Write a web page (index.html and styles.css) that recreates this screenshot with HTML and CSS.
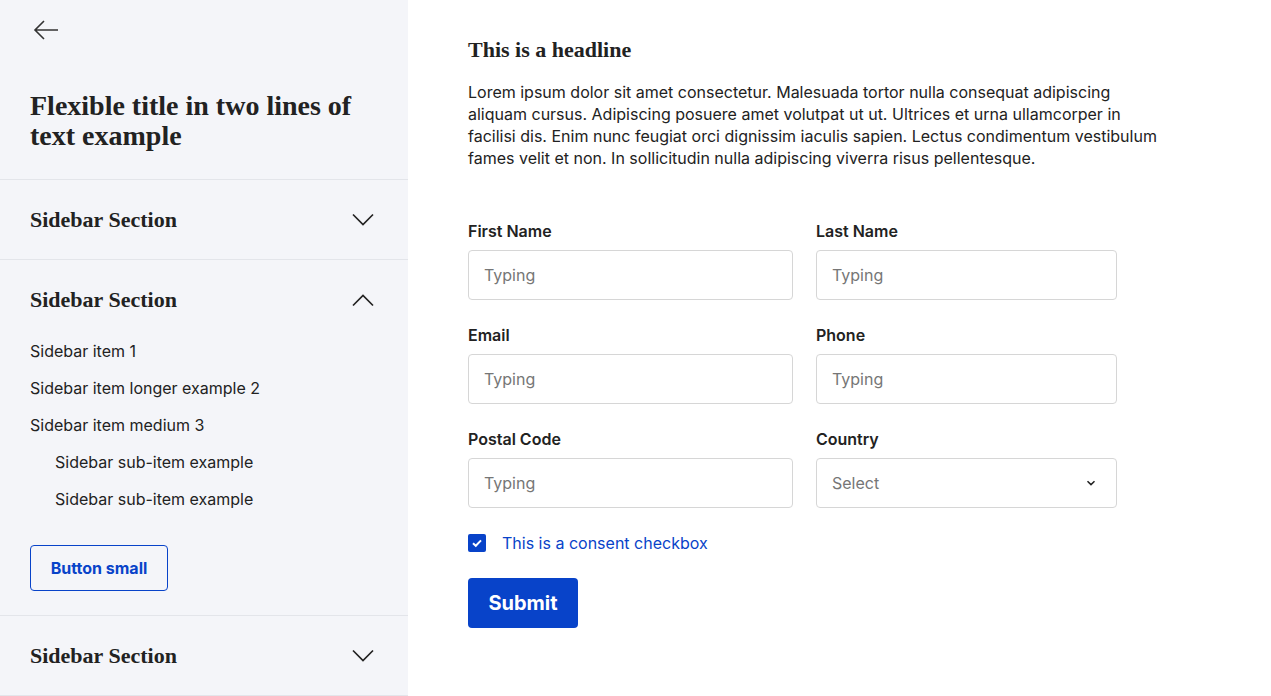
FILE: index.html
```html
<!DOCTYPE html>
<html>
<head>
<meta charset="utf-8">
<link rel="stylesheet" href="styles.css">
</head>
<body>
<div class="page">
  <aside class="sidebar">
    <div class="sb-top">
      <button class="back" aria-label="Back">
        <svg width="26" height="20" viewBox="0 0 26 20"><path d="M25 10H2M11 1L2 10l9 9" fill="none" stroke="#333" stroke-width="1.6"/></svg>
      </button>
      <h1 class="sb-title">Flexible title in two lines of text example</h1>
    </div>
    <section class="sb-section">
      <div class="sb-head"><span>Sidebar Section</span>
        <svg class="chev" width="22" height="13" viewBox="0 0 22 13"><path d="M1 1.5l10 10 10-10" fill="none" stroke="#222" stroke-width="1.7"/></svg>
      </div>
    </section>
    <section class="sb-section open">
      <div class="sb-head"><span>Sidebar Section</span>
        <svg class="chev" width="22" height="13" viewBox="0 0 22 13"><path d="M1 11.5l10-10 10 10" fill="none" stroke="#222" stroke-width="1.7"/></svg>
      </div>
      <ul class="sb-list">
        <li>Sidebar item 1</li>
        <li>Sidebar item longer example 2</li>
        <li>Sidebar item medium 3</li>
        <li class="sub">Sidebar sub-item example</li>
        <li class="sub">Sidebar sub-item example</li>
      </ul>
      <button class="btn-small">Button small</button>
    </section>
    <section class="sb-section">
      <div class="sb-head"><span>Sidebar Section</span>
        <svg class="chev" width="22" height="13" viewBox="0 0 22 13"><path d="M1 1.5l10 10 10-10" fill="none" stroke="#222" stroke-width="1.7"/></svg>
      </div>
    </section>
  </aside>
  <main class="main">
    <h2 class="headline">This is a headline</h2>
    <p class="intro">Lorem ipsum dolor sit amet consectetur. Malesuada tortor nulla consequat adipiscing aliquam cursus. Adipiscing posuere amet volutpat ut ut. Ultrices et urna ullamcorper in facilisi dis. Enim nunc feugiat orci dignissim iaculis sapien. Lectus condimentum vestibulum fames velit et non. In sollicitudin nulla adipiscing viverra risus pellentesque.</p>
    <form class="form">
      <div class="grid">
        <label class="field"><span class="lbl">First Name</span><input class="inp" placeholder="Typing"></label>
        <label class="field"><span class="lbl">Last Name</span><input class="inp" placeholder="Typing"></label>
        <label class="field"><span class="lbl">Email</span><input class="inp" placeholder="Typing"></label>
        <label class="field"><span class="lbl">Phone</span><input class="inp" placeholder="Typing"></label>
        <label class="field"><span class="lbl">Postal Code</span><input class="inp" placeholder="Typing"></label>
        <label class="field"><span class="lbl">Country</span>
          <div class="inp select"><span>Select</span>
            <svg width="10" height="6" viewBox="0 0 10 6"><path d="M1.5 1.2L5 4.6l3.5-3.4" fill="none" stroke="#222" stroke-width="1.5"/></svg>
          </div>
        </label>
      </div>
      <label class="consent">
        <span class="box"><svg width="12" height="10" viewBox="0 0 12 10"><path d="M2 5.2l2.8 2.6L10 2.4" fill="none" stroke="#fff" stroke-width="2"/></svg></span>
        <span>This is a consent checkbox</span>
      </label>
      <button type="button" class="submit">Submit</button>
    </form>
  </main>
</div>
</body>
</html>
```
FILE: styles.css
```css
* { box-sizing: border-box; }
html, body { margin: 0; padding: 0; }
body {
  font-family: Inter, "Noto Sans", sans-serif;
  color: #222;
  background: #fff;
}
.page {
  display: flex;
  width: 1271px;
  height: 696px;
  overflow: hidden;
}
.sidebar {
  width: 408px;
  flex: none;
  background: #f4f5f9;
  display: flex;
  flex-direction: column;
}
.sb-top {
  padding: 19px 30px 28px;
  border-bottom: 1px solid #e3e5ea;
}
.back {
  background: none;
  border: 0;
  padding: 0;
  margin: 0 0 0 3px;
  display: block;
  height: 24px;
}
.sb-title {
  margin: 48px 0 0;
  font-family: "Liberation Serif", serif;
  font-weight: bold;
  font-size: 28px;
  line-height: 30px;
  color: #222;
}
.sb-section {
  border-bottom: 1px solid #e3e5ea;
}
.sb-head {
  height: 79px;
  padding: 0 34px 0 30px;
  display: flex;
  align-items: center;
  justify-content: space-between;
  font-family: "Liberation Serif", serif;
  font-weight: bold;
  font-size: 22px;
  color: #222;
}
.open .sb-head { height: 80px; }
.sb-list {
  list-style: none;
  margin: 0;
  padding: 0 30px;
}
.sb-list li {
  font-size: 16px;
  line-height: 22px;
  margin-bottom: 15px;
  color: #222;
}
.sb-list li.sub { padding-left: 25px; }
.btn-small {
  margin: 35px 0 24px 30px;
  width: 138px;
  height: 46px;
  border: 1.5px solid #0843c9;
  border-radius: 4px;
  background: transparent;
  color: #0843c9;
  font-family: Inter, sans-serif;
  font-weight: 700;
  font-size: 16px;
  display: block;
}
.main {
  flex: 1;
  padding: 38px 60px 0;
}
.headline {
  margin: 0;
  font-family: "Liberation Serif", serif;
  font-weight: bold;
  font-size: 22px;
  line-height: 24px;
  color: #222;
}
.intro {
  margin: 19px 0 0;
  width: 700px;
  font-size: 16px;
  line-height: 22px;
  color: #222;
}
.form { margin-top: 52px; }
.grid {
  display: grid;
  grid-template-columns: 325px 301px;
  column-gap: 23px;
  row-gap: 25px;
}
.field { display: flex; flex-direction: column; }
.lbl {
  font-size: 16px;
  font-weight: 600;
  line-height: 20px;
  margin-bottom: 9px;
  color: #222;
}
.inp {
  height: 50px;
  border: 1px solid #d6d6d6;
  border-radius: 4px;
  padding: 0 15px;
  font-family: Inter, sans-serif;
  font-size: 16px;
  color: #222;
  background: #fff;
  outline: none;
}
.inp::placeholder { color: #767676; }
.select {
  display: flex;
  align-items: center;
  justify-content: space-between;
  color: #767676;
  padding-right: 20px;
}
.consent {
  margin-top: 24px;
  display: flex;
  align-items: center;
  gap: 16px;
  color: #0843c9;
  font-size: 16px;
  line-height: 22px;
}
.box {
  width: 18px;
  height: 18px;
  border-radius: 2px;
  background: #0843c9;
  display: flex;
  align-items: center;
  justify-content: center;
}
.submit {
  margin-top: 24px;
  width: 110px;
  height: 50px;
  border: 0;
  border-radius: 4px;
  background: #0843c9;
  color: #fff;
  font-family: Inter, sans-serif;
  font-weight: 700;
  font-size: 20px;
  display: block;
}
```
